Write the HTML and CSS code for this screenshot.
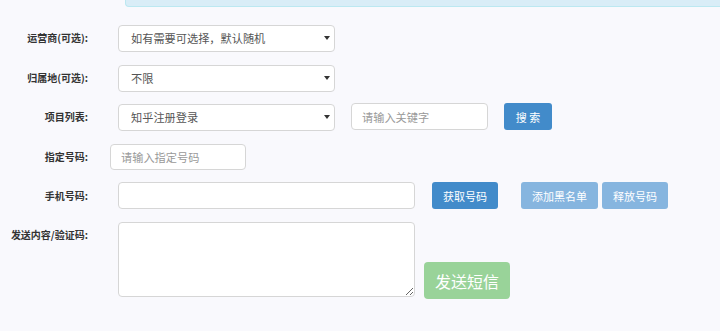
FILE: index.html
```html
<!DOCTYPE html>
<html lang="zh-CN">
<head>
    <meta charset="UTF-8">
    <meta name="viewport" content="width=device-width, initial-scale=1.0">
    <title>接码平台</title>
    <link rel="stylesheet" href="styles.css">
</head>
<body>
    <div class="tip-box"></div>

    <form class="sms-form">
        <div class="form-row">
            <label class="form-label">运营商(可选):</label>
            <div class="select-wrap">
                <select class="form-select">
                    <option>如有需要可选择，默认随机</option>
                </select>
            </div>
        </div>

        <div class="form-row form-row-close">
            <label class="form-label">归属地(可选):</label>
            <div class="select-wrap">
                <select class="form-select">
                    <option>不限</option>
                </select>
            </div>
        </div>

        <div class="form-row">
            <label class="form-label">项目列表:</label>
            <div class="select-wrap">
                <select class="form-select">
                    <option>知乎注册登录</option>
                </select>
            </div>
            <input type="text" class="form-input keyword-input" placeholder="请输入关键字">
            <button type="button" class="btn btn-primary search-btn">搜 索</button>
        </div>

        <div class="form-row form-row-close">
            <label class="form-label">指定号码:</label>
            <input type="text" class="form-input number-input" placeholder="请输入指定号码">
        </div>

        <div class="form-row">
            <label class="form-label">手机号码:</label>
            <input type="text" class="form-input phone-input">
            <button type="button" class="btn btn-primary get-btn">获取号码</button>
            <button type="button" class="btn btn-light black-btn">添加黑名单</button>
            <button type="button" class="btn btn-light release-btn">释放号码</button>
        </div>

        <div class="form-row form-row-tall">
            <label class="form-label">发送内容/验证码:</label>
            <textarea class="form-textarea"></textarea>
            <button type="button" class="btn btn-success send-btn">发送短信</button>
        </div>
    </form>
</body>
</html>
```

FILE: styles.css
```css
body {
    margin: 0;
    background-color: #f9f9fd;
    font-family: "Noto Sans CJK SC", "Noto Sans", sans-serif;
    color: #333;
}

.tip-box {
    margin-left: 125px;
    height: 6px;
    background-color: #d9edf7;
    border-left: 1px solid #bce8f1;
    border-bottom: 1px solid #bce8f1;
    border-bottom-left-radius: 4px;
}

.sms-form {
    padding-top: 17px;
}

.form-row {
    display: flex;
    align-items: center;
    height: 27px;
    margin-bottom: 13px;
}

.form-row-close {
    margin-bottom: 12px;
}

.form-row-tall {
    height: auto;
    align-items: flex-start;
}

.form-label {
    width: 88px;
    flex-shrink: 0;
    text-align: right;
    font-size: 10px;
    font-weight: bold;
    color: #333;
    margin-right: 30px;
}

.form-row-tall .form-label {
    padding-top: 5px;
}

.select-wrap {
    position: relative;
    width: 217px;
    height: 27px;
}

/* small solid caret like the old bootstrap select */
.select-wrap::after {
    content: "";
    position: absolute;
    right: 5px;
    top: 12px;
    border-left: 3px solid transparent;
    border-right: 3px solid transparent;
    border-top: 4px solid #333;
    pointer-events: none;
}

.form-select {
    -webkit-appearance: none;
    appearance: none;
    width: 100%;
    height: 100%;
    box-sizing: border-box;
    padding: 0 0 0 12px;
    border: 1px solid #d6d6d6;
    border-radius: 4px;
    background-color: #fff;
    font-family: inherit;
    font-size: 11.2px;
    color: #555;
    outline: none;
}

.form-input,
.form-textarea {
    box-sizing: border-box;
    border: 1px solid #d6d6d6;
    border-radius: 4px;
    background-color: #fff;
    font-family: inherit;
    font-size: 11.2px;
    color: #555;
    outline: none;
    padding: 0 10px;
    height: 27px;
}

.form-input::placeholder {
    color: #999;
}

.keyword-input {
    width: 137px;
    margin-left: 16px;
}

.number-input {
    width: 136px;
    height: 26px;
    margin-left: -8px;
}

.phone-input {
    width: 297px;
}

.form-textarea {
    width: 297px;
    height: 75px;
    padding: 6px 10px;
    resize: vertical;
}

.btn {
    box-sizing: border-box;
    height: 27px;
    padding: 0;
    border: none;
    border-radius: 3px;
    color: #fff;
    font-family: inherit;
    font-size: 11px;
    cursor: pointer;
}

.btn-primary {
    background-color: #428bca;
}

.btn-light {
    background-color: #86b5df;
}

.btn-success {
    background-color: #99d399;
}

.search-btn {
    width: 48px;
    margin-left: 16px;
}

.get-btn {
    width: 66px;
    margin-left: 17px;
}

.black-btn {
    width: 77px;
    margin-left: 23px;
}

.release-btn {
    width: 66px;
    margin-left: 4px;
}

.send-btn {
    width: 86px;
    height: 37px;
    margin-left: 9px;
    margin-top: 40px;
    border-radius: 4px;
    font-size: 16px;
}
```
